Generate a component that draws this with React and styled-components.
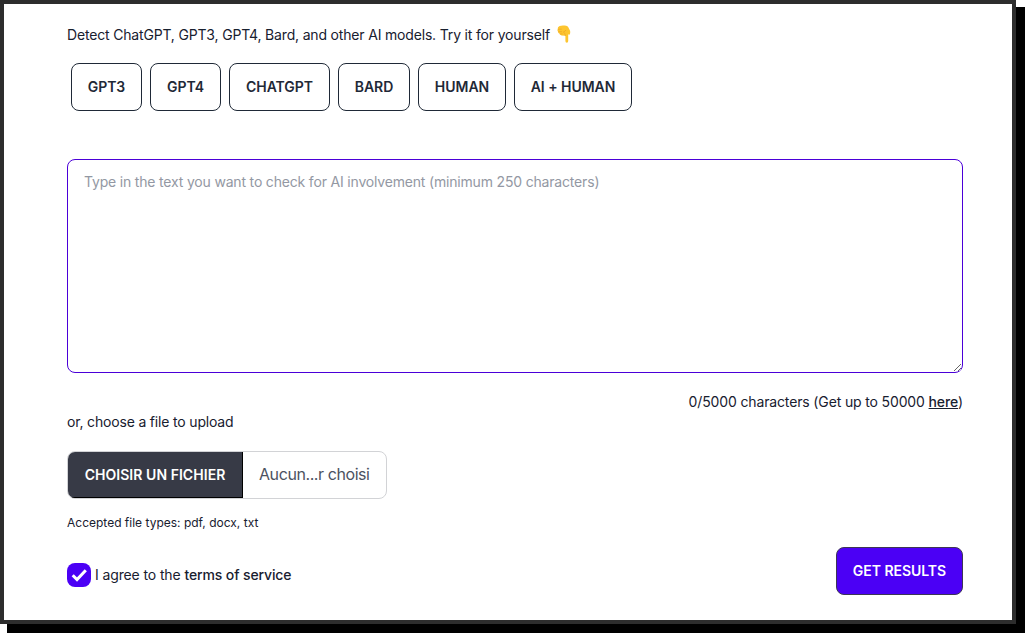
import React, { useState } from 'react';
import styled, { createGlobalStyle } from 'styled-components';

const GlobalStyle = createGlobalStyle`
  * { box-sizing: border-box; }
  html, body { margin: 0; background: #fff; }
  body { font-family: Inter, "Liberation Sans", sans-serif; font-size: 14px; line-height: 20px; color: #18202f; }
`;

const Page = styled.main`
  height: 633px;
  overflow: hidden;
`;

const Frame = styled.div`
  width: 1016px;
  height: 624px;
  border: 4px solid #2d2d2d;
  background: #fff;
  box-shadow: 8px 8px 0 1px #000;
  padding: 21px 49px 0 63px;
`;

const Form = styled.form`
  width: 896px;
  display: flex;
  flex-direction: column;
  align-items: flex-start;
`;

const Line = styled.p`
  margin: 0;
  display: flex;
  align-items: center;
  height: 20px;
  letter-spacing: -0.175px;
`;

const Hand = styled.svg`
  width: 16px;
  height: 20px;
  margin: -2px 0 0 6px;
`;

const Samples = styled.div`
  display: flex;
  gap: 8px;
  margin: 18px 0 0 4px;
`;

const Button = styled.button`
  height: 48px;
  width: ${(p) => p.$width}px;
  padding: 0;
  border: 1px solid ${(p) => (p.$primary ? '#3d3556' : '#1f2937')};
  border-radius: 8px;
  background: ${(p) => (p.$primary ? '#4b00f5' : '#fff')};
  color: ${(p) => (p.$primary ? '#fff' : '#1f2937')};
  font: 600 14px/14px Inter, "Liberation Sans", sans-serif;
  letter-spacing: -0.04px;
  white-space: nowrap;
`;

const TextArea = styled.textarea`
  display: block;
  width: 896px;
  height: 214px;
  margin: 48px 0 0;
  padding: 12px 16px;
  border: 1px solid #4b00d8;
  border-radius: 8px;
  outline: none;
  background: #fff;
  color: #1f2937;
  font: 400 14px/20px Inter, "Liberation Sans", sans-serif;
  letter-spacing: -0.18px;
  resize: vertical;
  &::placeholder { color: #9398a3; opacity: 1; }
`;

const Counter = styled.div`
  align-self: flex-end;
  margin-top: 19px;
  letter-spacing: -0.14px;
`;

const More = styled.a`
  color: inherit;
  font-weight: 500;
  text-decoration: underline;
`;

const FilePicker = styled.div`
  display: flex;
  width: 320px;
  height: 48px;
  margin-top: 19px;
  border: 1px solid #d2d3d6;
  border-radius: 8px;
  overflow: hidden;
`;

const FileButton = styled.span`
  display: flex;
  align-items: center;
  justify-content: center;
  width: 175px;
  border-right: 1px solid #000;
  border-bottom: 1px solid #000;
  background: #373a46;
  color: #fff;
  font-weight: 600;
  letter-spacing: 0.05px;
`;

const FileName = styled.span`
  padding-left: 16px;
  color: #4c525f;
  font-size: 16px;
  letter-spacing: -0.42px;
  line-height: 45px;
`;

const Hint = styled.div`
  margin-top: 16px;
  font-size: 12px;
  line-height: 16px;
`;

const Footer = styled.div`
  display: flex;
  justify-content: space-between;
  width: 100%;
  margin-top: 16px;
`;

const Agreement = styled.label`
  display: flex;
  align-items: center;
  height: 24px;
  margin-top: 16px;
  letter-spacing: -0.12px;
  white-space: pre;
`;

const CheckBox = styled.span`
  display: flex;
  width: 24px;
  height: 24px;
  margin-right: 4px;
  border-radius: 8px;
  background: #4b00f5;
`;

const Terms = styled.span`
  font-weight: 500;
`;

const samples = [
  ['GPT3', 71],
  ['GPT4', 71],
  ['CHATGPT', 101],
  ['BARD', 72],
  ['HUMAN', 88],
  ['AI + HUMAN', 118],
];

function PointingHand() {
  return (
    <Hand viewBox="0 0 16 20" aria-hidden="true">
      <path d="M3.6 2Q5.5 1.2 8.6 1.5q3.6.2 4.2 2.8 1.6 2.3 1.4 4.6-.2 1.9-1.4 1.9L12.2 10v7.1q0 1.6-1.4 1.6t-1.4-1.6v-5.3l-3.8-.4Q4 11.1 3.6 9.8 2.2 9.2 2 7.7 1 6.5 1.7 5.1 1.4 3 3.6 2Z" fill="#fdc52f" />
      <path d="M2.4 5.3q1.5-.3 2.9-.2M2.6 7.8q1.4-.3 3-.1M4.2 10q1-.3 2-.1M9.4 11.6q-.2-2.3-2-3.7 1.6-.3 2.4-1.6" fill="none" stroke="#eda526" strokeWidth=".7" strokeLinecap="round" />
    </Hand>
  );
}

export default function App() {
  const [text, setText] = useState('');
  return (
    <Page>
      <GlobalStyle />
      <Frame>
        <Form onSubmit={(e) => e.preventDefault()}>
          <Line>
            Detect ChatGPT, GPT3, GPT4, Bard, and other AI models. Try it for yourself
            <PointingHand />
          </Line>
          <Samples>
            {samples.map(([label, width]) => (
              <Button key={label} type="button" $width={width}>{label}</Button>
            ))}
          </Samples>
          <TextArea
            value={text}
            onChange={(e) => setText(e.target.value)}
            placeholder="Type in the text you want to check for AI involvement (minimum 250 characters)"
          />
          <Counter>{text.length}/5000 characters (Get up to 50000 <More>here</More>)</Counter>
          <Line>or, choose a file to upload</Line>
          <FilePicker>
            <FileButton>CHOISIR UN FICHIER</FileButton>
            <FileName>Aucun...r choisi</FileName>
          </FilePicker>
          <Hint>Accepted file types: pdf, docx, txt</Hint>
          <Footer>
            <Agreement>
              <CheckBox>
                <svg width="24" height="24" viewBox="0 0 24 24" aria-hidden="true">
                  <path d="M5.7 12.2 10 16.5 18.8 7.2" fill="none" stroke="#fff" strokeWidth="3" />
                </svg>
              </CheckBox>
              I agree to the <Terms>terms of service</Terms>
            </Agreement>
            <Button $primary $width={127}>GET RESULTS</Button>
          </Footer>
        </Form>
      </Frame>
    </Page>
  );
}
